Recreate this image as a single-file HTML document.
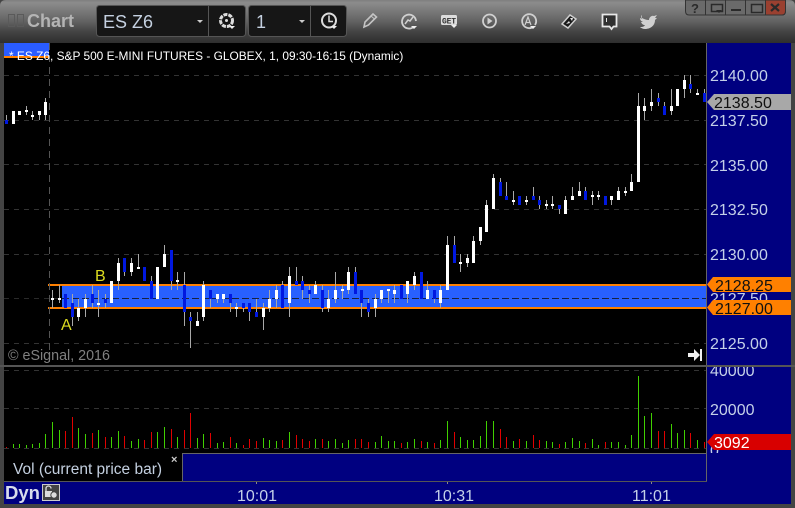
<!DOCTYPE html>
<html><head><meta charset="utf-8"><title>Chart</title>
<style>
html,body{margin:0;padding:0;background:#222;width:795px;height:508px;overflow:hidden}
svg{display:block;font-family:"Liberation Sans",Arial,sans-serif}
.ax{font-size:16px;fill:#c4d0e8}
.tag{font-size:16px;fill:#101010}
</style></head><body>
<svg width="795" height="508" viewBox="0 0 795 508" xmlns="http://www.w3.org/2000/svg">
<defs>
<linearGradient id="tb" x1="0" y1="0" x2="0" y2="1"><stop offset="0" stop-color="#7e7e7e"/><stop offset=".06" stop-color="#8c8c8c"/><stop offset=".5" stop-color="#626262"/><stop offset=".75" stop-color="#424242"/><stop offset="1" stop-color="#2e2e2e"/></linearGradient>
<clipPath id="volc"><rect x="707" y="367" width="84" height="86"/></clipPath>
</defs>
<rect width="795" height="508" fill="#444"/>
<path d="M0 6Q0 0 6 0H789Q795 0 795 6V43H0Z" fill="url(#tb)"/>

<!-- title left -->
<rect x="8.500" y="14.500" width="6" height="12" fill="none" stroke="#5a5a5a"/>
<rect x="17.500" y="14.500" width="6" height="12" fill="none" stroke="#5a5a5a"/>
<text x="27" y="27" font-size="18" font-weight="bold" fill="#b4b4b4">Chart</text>

<!-- symbol boxes -->
<rect x="96.500" y="5.500" width="149" height="31" rx="3" fill="#161616" stroke="#555"/>
<path d="M208.500 6V36" stroke="#555"/>
<text x="103" y="28" font-size="18" fill="#c4d0e0">ES Z6</text>
<path d="M197 20h6l-3 3z" fill="#ccc"/>
<rect x="248.500" y="5.500" width="98" height="31" rx="3" fill="#161616" stroke="#555"/>
<path d="M310.500 6V36" stroke="#555"/>
<text x="256" y="28" font-size="18" fill="#c4d0e0">1</text>
<path d="M299 20h6l-3 3z" fill="#ccc"/>
<!-- gear -->
<circle cx="226.500" cy="20.500" r="6" fill="none" stroke="#ddd" stroke-width="3" stroke-dasharray="4 1"/>
<circle cx="226.500" cy="20.500" r="1.500" fill="#ddd"/>
<path d="M229 26h6l-3 3z" fill="#eee"/>
<!-- clock -->
<circle cx="329" cy="20.500" r="7" fill="none" stroke="#ddd" stroke-width="2"/>
<path d="M329 15.500V21.500H333" fill="none" stroke="#ddd" stroke-width="1.500"/>
<path d="M331 26h6l-3 3z" fill="#eee"/>

<!-- toolbar icons -->
<path d="M364 27l1-5 8-8 3.500 3-8 8z" fill="none" stroke="#c4c4c4" stroke-width="1.600"/>
<path d="M371 16l3.500 3" stroke="#c4c4c4" stroke-width="1"/>
<path d="M414 26.500A7 7 0 1 1 416 21" fill="none" stroke="#d0d0d0" stroke-width="1.800"/>
<path d="M405 24l3-4 2 1 3-4" fill="none" stroke="#d0d0d0" stroke-width="1.500"/>
<path d="M411 26h6l-3 3z" fill="#eee"/>
<rect x="441" y="15" width="16" height="10" rx="1.500" fill="#dcdcdc"/>
<text x="442" y="23.500" font-size="8" font-weight="bold" fill="#333" textLength="14" font-family="Liberation Mono">GET</text>
<path d="M451 25h6l-3 3z" fill="#eee"/>
<circle cx="489.500" cy="21" r="6.500" fill="none" stroke="#d0d0d0" stroke-width="1.800"/>
<path d="M487.500 17.500l5 3.500-5 3.500z" fill="#d0d0d0"/>
<path d="M535 25A7 7 0 1 0 533 27" fill="none" stroke="#d0d0d0" stroke-width="1.800"/>
<path d="M525 25l3-8 3 8M526 22.500h4" fill="none" stroke="#d0d0d0" stroke-width="1.200"/>
<path d="M530 26h6l-3 3z" fill="#eee"/>
<path d="M562 24l8-9 6 4-8 9z" fill="#1a1a1a" stroke="#d0d0d0" stroke-width="1.500"/>
<path d="M566 24l3-3 1 2zM570 18l3 0-1 3z" fill="#e4e4e4"/>
<path d="M602.500 14.500h14v12h-3l-2 2.500-2-2.500h-7z" fill="#303030" stroke="#e8e8e8" stroke-width="1.800"/>
<path d="M606.500 18v4" stroke="#e8e8e8"/>
<path d="M642 18c2 1 4 2 7 2 0-3 3-5 5-4l3-1-2 3 2 0-2 2c0 6-5 9-10 9-2 0-4-1-5-2 2 0 4 0 5-2-2 0-3-1-4-3h2c-2-1-3-2-3-4l2 1c-1-2-1-3 0-4z" fill="#d0d0d0"/>

<!-- window buttons -->
<path d="M685.500 0V11Q685.500 15 689 15H782Q785.500 15 785.500 11V0Z" fill="#6a6a6a" stroke="#333"/>
<path d="M765.500 0H785.500V11Q785.500 15 782 15H765.500Z" fill="#9a4030" stroke="#333"/>
<path d="M705.500 0V15M725.500 0V15M745.500 0V15" stroke="#333"/>
<text x="691" y="13" font-size="13" font-weight="bold" fill="#2a2a2a">?</text>
<path d="M711.500 4.500h11v7h-11z" fill="none" stroke="#2a2a2a" stroke-width="1.500"/>
<path d="M716 10h6l-3 3z" fill="#2a2a2a"/>
<rect x="731" y="9" width="10" height="2" fill="#2a2a2a"/>
<rect x="751.500" y="4.500" width="11" height="8" fill="none" stroke="#2a2a2a" stroke-width="1.500"/>
<path d="M771 4l8 7M779 4l-8 7" stroke="#2a2a2a" stroke-width="2.200"/>

<!-- chart area -->
<rect x="4" y="43" width="702" height="322" fill="#000"/>
<rect x="707" y="43" width="84" height="461" fill="#000080"/>
<rect x="4" y="367" width="702" height="86" fill="#000"/>

<!-- band -->
<rect x="62" y="286" width="644" height="21" fill="#2860ff"/>
<rect x="48" y="284" width="658" height="2" fill="#ff8000"/>
<rect x="48" y="307" width="658" height="2" fill="#ff8000"/>

<!-- grid -->
<g stroke="#333" stroke-dasharray="5 5" shape-rendering="crispEdges">
<path d="M4 75.500H706M4 120.500H706M4 164.500H706M4 209.500H706M4 254.500H706M4 343.500H706M4 370.500H706M4 408.500H706M4 448.500H706"/>
</g>
<path d="M4 298.500H706" stroke="#2a2a2a" stroke-dasharray="5 5" shape-rendering="crispEdges"/>
<path d="M62 298.500H706" stroke="#10204a" stroke-dasharray="5 5" shape-rendering="crispEdges"/>
<path d="M49.500 43V365" stroke="#555" stroke-dasharray="7 5" shape-rendering="crispEdges"/>

<!-- header -->
<rect x="4" y="43" width="45" height="13" fill="#2a5cff"/>
<rect x="4" y="56" width="45" height="2" fill="#ff8000"/>
<text x="9" y="60" font-size="11.900" fill="#fff">* ES Z6, S&amp;P 500 E-MINI FUTURES - GLOBEX, 1, 09:30-16:15 (Dynamic)</text>

<!-- candles -->
<g transform="translate(.5 0)" fill="none" shape-rendering="crispEdges">
<path stroke="#a8a8a8" stroke-width="1" d="M6 115V124M32 111V120M26 106V115M39 111V120M45 98V120M52 290V308M59 285V303M72 294V326M78 299V321M85 294V317M92 285V308M98 290V317M105 294V308M118 258V290M124 258V276M131 258V276M138 254V269M151 276V299M164 245V267M171 250V290M177 272V290M184 272V326M190 312V348M197 312V326M203 281V321M210 290V308M217 294V303M223 294V303M230 294V312M236 303V317M243 303V312M249 303V321M256 299V317M263 303V330M269 290V312M276 285V308M282 281V308M289 267V317M296 267V285M302 276V299M309 285V303M315 281V294M322 285V312M328 290V312M335 272V303M342 285V299M348 267V294M355 267V294M361 290V317M368 299V317M375 294V317M381 290V303M388 289V303M394 285V303M407 281V303M414 272V290M427 281V299M434 290V303M440 285V308M447 236V290M454 236V263M460 254V272M467 254V267M473 236V263M480 227V245M486 200V232M493 174V209M500 178V196M506 182V200M513 191V205M526 196V205M533 187V200M539 196V209M546 200V209M552 196V209M559 205V214M565 196V214M572 187V200M579 182V196M585 187V200M592 191V205M598 191V200M611 196V205M618 187V200M625 187V196M631 174V191M638 93V182M644 98V120M651 89V111M658 93V106M664 102V115M671 89V115M684 75V98M690 75V93M697 89V95M704 89V102"/>
<path stroke="#fff" stroke-width="3" d="M13 111V124M19 111V115M26 110V112M32 115V117M39 111V115M45 102V115M52 298V300M59 298V300M78 308V317M85 299V308M98 303V305M111 281V303M118 263V281M131 263V272M138 267V269M157 267V299M164 254V267M177 280V282M197 321V326M203 285V317M217 294V299M223 294V299M236 307V309M263 308V317M269 299V308M276 290V299M289 276V303M315 285V294M328 299V308M335 290V299M342 289V291M348 272V290M375 299V308M381 290V299M388 289V291M394 290V294M407 281V294M414 276V285M427 290V299M440 290V303M447 245V290M460 262V264M467 258V263M473 241V263M480 227V241M486 205V232M493 178V209M513 200V202M526 200V202M546 204V206M552 204V206M565 200V214M572 196V200M579 191V196M592 195V197M598 195V197M611 196V200M618 191V200M625 191V193M631 182V191M638 106V182M644 106V111M651 102V106M671 106V111M677 89V106M684 80V89M697 93V95"/>
<path stroke="#0018e0" stroke-width="3" d="M6 120V124M65 294V308M72 303V317M92 294V303M105 299V303M124 258V272M144 267V281M151 281V299M171 250V281M184 285V312M190 317V321M210 290V299M230 294V303M243 303V308M249 303V312M256 312V317M282 285V308M296 281V285M302 281V290M309 290V294M322 290V308M355 272V294M361 290V303M368 303V312M401 285V299M421 272V299M434 290V299M454 245V263M500 182V196M506 196V200M519 196V205M533 196V200M539 200V205M559 205V209M585 191V200M605 196V205M658 98V102M664 106V115M690 84V89M704 93V102"/>
<!-- volume -->
<path stroke="#40d000" stroke-width="1" d="M13 444V448M19 444V448M26 445V448M32 444V448M39 443V448M45 434V448M52 422V448M59 430V448M78 428V448M85 434V448M98 430V448M111 437V448M118 431V448M131 441V448M138 439V448M157 432V448M164 427V448M177 437V448M197 438V448M203 434V448M217 443V448M223 442V448M236 443V448M263 438V448M269 440V448M276 441V448M289 432V448M315 439V448M328 441V448M335 439V448M342 443V448M348 440V448M375 442V448M381 436V448M388 441V448M394 441V448M407 442V448M414 439V448M427 442V448M440 440V448M447 421V448M460 437V448M467 440V448M473 440V448M480 436V448M486 421V448M493 421V448M513 441V448M526 441V448M546 441V448M552 442V448M565 442V448M572 438V448M579 441V448M592 439V448M598 445V448M611 442V448M618 442V448M625 445V448M631 435V448M638 376V448M644 416V448M651 413V448M671 424V448M677 433V448M684 430V448M697 440V448"/>
<path stroke="#e00000" stroke-width="1" d="M6 447V448M65 431V448M72 417V448M92 433V448M105 437V448M124 436V448M144 440V448M151 432V448M171 429V448M184 430V448M190 413V448M210 433V448M230 437V448M243 445V448M249 439V448M256 441V448M282 440V448M296 435V448M302 439V448M309 441V448M322 439V448M355 439V448M361 439V448M368 442V448M401 443V448M421 441V448M434 443V448M454 432V448M500 429V448M506 437V448M519 439V448M533 435V448M539 440V448M559 444V448M585 443V448M605 442V448M658 431V448M664 431V448M690 433V448M704 442V448"/>
</g>

<text x="95" y="281" font-size="16" fill="#dcdc20">B</text>
<text x="61" y="330" font-size="16" fill="#dcdc20">A</text>
<text x="8" y="360" font-size="14.300" fill="#808080">© eSignal, 2016</text>
<!-- go to end arrow -->
<path d="M688 353h6v-4l6 6-6 6v-4h-6z" fill="#f0f0f0"/>
<rect x="700" y="349" width="2" height="12" fill="#f0f0f0"/>

<!-- axis -->
<rect x="706" y="43" width="1" height="439" fill="#666"/>
<text class="ax" x="710" y="81">2140.00</text>
<text class="ax" x="710" y="126">2137.50</text>
<text class="ax" x="710" y="171">2135.00</text>
<text class="ax" x="710" y="215">2132.50</text>
<text class="ax" x="710" y="260">2130.00</text>
<text class="ax" x="710" y="304">2127.50</text>
<text class="ax" x="710" y="349">2125.00</text>
<path d="M707 102l7-8H791V110H714z" fill="#a8a8a8"/>
<text class="tag" x="714" y="108">2138.50</text>
<path d="M707 284.500l6-7.500H791V292H713z" fill="#ff8000"/>
<text class="tag" x="715" y="291">2128.25</text>
<path d="M707 307.500l6-7.500H791V315H713z" fill="#ff8000"/>
<text class="tag" x="715" y="314">2127.00</text>

<!-- separator -->
<rect x="0" y="365" width="795" height="2" fill="#555"/>
<g clip-path="url(#volc)">
<text class="ax" x="710" y="376">40000</text>
<text class="ax" x="710" y="415">20000</text>
<text class="ax" x="710" y="456">0</text>
</g>
<path d="M707 442l7-8H791V450H714z" fill="#d80000"/>
<text class="tag" x="714" y="448" style="fill:#fff">3092</text>

<!-- legend -->
<rect x="182" y="453" width="525" height="29" fill="#000080"/>
<rect x="4" y="453" width="178" height="28" fill="#000"/>
<path d="M182 453.500H706M182.500 453V481M706.500 453V482" stroke="#666" shape-rendering="crispEdges"/>
<text x="13" y="474" font-size="15.500" fill="#c4d0e0">Vol (current price bar)</text>
<text x="171" y="463" font-size="11" font-weight="bold" fill="#ccc">×</text>
<!-- bottom -->
<rect x="4" y="482" width="787" height="22" fill="#000080"/>
<path d="M4 481.500H707" stroke="#555" shape-rendering="crispEdges"/>
<path d="M256.500 482V484M447.500 482V484M651.500 482V484" stroke="#888" shape-rendering="crispEdges"/>
<text x="5" y="499" font-size="18.500" font-weight="bold" fill="#d8dcec">Dyn</text>
<rect x="42.500" y="484.500" width="17" height="16" fill="#444" stroke="#ccc"/>
<path d="M46 491v-2.500a2.500 2.500 0 0 1 5 0" fill="none" stroke="#ddd" stroke-width="1.300"/>
<rect x="45" y="491" width="7" height="6" fill="#ddd"/>
<circle cx="54" cy="495" r="3.200" fill="#ddd" stroke="#444"/>
<text class="ax" x="237" y="501">10:01</text>
<text class="ax" x="434" y="501">10:31</text>
<text class="ax" x="632" y="501">11:01</text>
</svg>
</body></html>
